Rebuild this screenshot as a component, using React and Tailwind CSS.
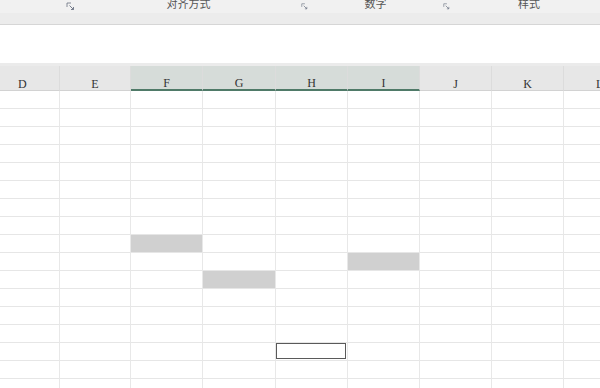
import React from "react";

const cols = [
  { l: "D", w: 60, align: "pl-[18px] text-left" },
  { l: "E", w: 71 },
  { l: "F", w: 72, sel: true },
  { l: "G", w: 73, sel: true },
  { l: "H", w: 72, sel: true },
  { l: "I", w: 72, sel: true },
  { l: "J", w: 72 },
  { l: "K", w: 72 },
  { l: "L", w: 36, align: "pl-[32px] text-left" },
];

const gray = {
  "8-2": true,
  "9-5": true,
  "10-3": true,
};

function Launcher() {
  return (
    <svg width="9" height="9" viewBox="0 0 9 9" className="text-gray-500">
      <path d="M1 1h4M1 1v4" stroke="currentColor" strokeWidth="0.8" fill="none" />
      <path d="M3.5 3.5l4 4M5 7.5h2.5V5" stroke="currentColor" strokeWidth="0.9" fill="none" />
    </svg>
  );
}

export default function App() {
  const rows = Array.from({ length: 17 }, (_, i) => i);
  return (
    <div className="w-[600px] h-[388px] overflow-hidden bg-white" style={{ fontFamily: '"Liberation Serif", "Noto Sans CJK SC", serif' }}>
      {/* ribbon group labels */}
      <div className="h-[13px] bg-[#f1f1f1] flex items-center text-[11px] text-[#555] relative" style={{ fontFamily: '"Noto Sans CJK SC", sans-serif' }}>
        <div className="w-[66px]" />
        <div className="w-[10px] flex items-center"><Launcher /></div>
        <div className="w-[225px] text-center leading-none -mt-[6px]">对齐方式</div>
        <div className="w-[7px] flex items-center"><Launcher /></div>
        <div className="w-[135px] text-center leading-none -mt-[6px]">数字</div>
        <div className="w-[7px] flex items-center"><Launcher /></div>
        <div className="flex-1 text-center leading-none -mt-[6px] pl-[8px]">样式</div>
      </div>
      <div className="h-[12px] bg-[#ececec] border-b border-[#d6d6d6]" />
      {/* blank formula area */}
      <div className="h-[38px] bg-white" />
      {/* column headers */}
      <div className="h-[3px] bg-[#ebebeb]" />
      <div className="flex h-[25px] bg-[#e7e7e7] text-[12px] text-[#333]">
        {cols.map((c, i) => (
          <div
            key={c.l}
            style={{ width: c.w }}
            className={`shrink-0 flex items-end leading-[12px] pb-0 ${c.align || "justify-center"} ${
              c.sel ? "bg-[#d6dcd9] border-b-2 border-[#4f7a68]" : "border-b border-[#d2d2d2]"
            } ${i < cols.length - 1 ? "border-r border-r-[#dcdcdc]" : ""}`}
          >
            <span className={c.align ? "" : "w-full text-center"}>{c.l}</span>
          </div>
        ))}
      </div>
      {/* grid */}
      <div className="flex flex-col">
        {rows.map((r) => (
          <div key={r} className="flex h-[18px]">
            {cols.map((c, i) => {
              const isGray = gray[`${r}-${i}`];
              const isSel = r === 14 && i === 4;
              return (
                <div
                  key={c.l}
                  style={{ width: c.w }}
                  className={`shrink-0 border-b border-[#e6e6e6] ${i < cols.length - 1 ? "border-r border-r-[#e8e8e8]" : ""} p-0`}
                >
                  {isGray && <div className="w-full h-full bg-[#d0d0d0]" />}
                  {isSel && <div className="w-[70px] h-[16px] border border-[#5a5a5a] bg-white" />}
                </div>
              );
            })}
          </div>
        ))}
      </div>
    </div>
  );
}
